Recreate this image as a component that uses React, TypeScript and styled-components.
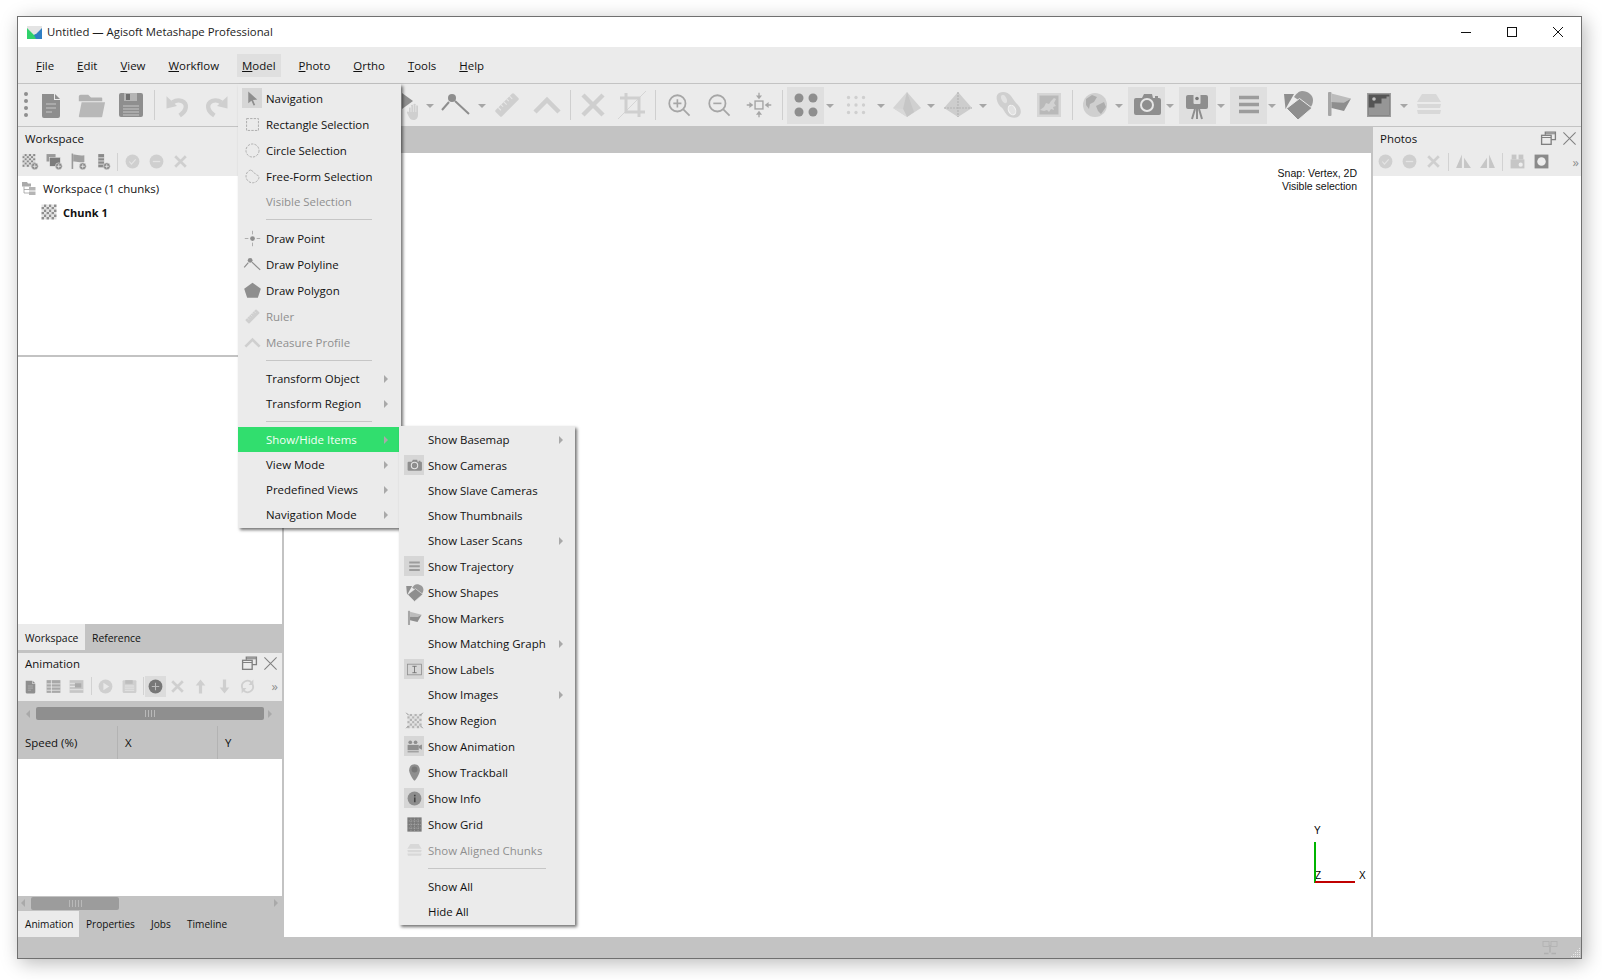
import React from "react";
import styled, { createGlobalStyle } from "styled-components";

const D = "#8e8e8e";
const M = "#a6a6a6";
const L = "#cfcfcf";
const PANEL = "#ebebeb";
const BAND = "#c3c3c3";

const GlobalStyle = createGlobalStyle`
  html, body { margin: 0; padding: 0; background: #fff; }
  body { font-family: "Open Sans", "Noto Sans", "Liberation Sans", sans-serif; font-size: 11.45px; color: #111; }
`;

type IconProps = { s?: number };
const icon = (content: React.ReactNode) => ({ s = 32 }: IconProps) => (
    <svg width={s} height={s} viewBox="0 0 32 32" style={{ display: "block" }}>{content}</svg>
);

const checker = (x: number, y: number, n: number, size: number, a: string, b: string) => {
    const out: React.ReactNode[] = [];
    for (let r = 0; r < n; r++) {
        for (let c = 0; c < n; c++) {
            out.push(<rect key={r + "-" + c} x={x + c * size} y={y + r * size} width={size} height={size} fill={(r + c) % 2 ? a : b} />);
        }
    }
    return out;
};

const DocIcon = icon(<>
    <path d="M7 5h12v6h6v16a2 2 0 0 1-2 2H9a2 2 0 0 1-2-2z" fill={D} />
    <path d="M20 5l5 5h-5z" fill={D} />
    <path d="M11 15h10M11 19h10M11 23h6" stroke="#c6c6c6" strokeWidth="1" />
</>);
const FolderIcon = icon(<>
    <path d="M3 7a2 2 0 0 1 2-2h8l3 3h11a1 1 0 0 1 1 1v3H3z" fill="#b2b2b2" />
    <path d="M6 13h25l-3 15a1 1 0 0 1-1 1H4a1 1 0 0 1-1-1z" fill="#b8b8b8" />
</>);
const SaveIcon = icon(<>
    <rect x="4" y="4" width="24" height="24" rx="2" fill={D} />
    <rect x="9" y="4" width="13" height="8" fill="#b5b5b5" />
    <rect x="11" y="5" width="4" height="6" fill="#6f6f6f" />
    <path d="M8 17h16M8 20h16M8 23h16M8 26h16" stroke="#c6c6c6" strokeWidth="1" />
</>);
const UndoIcon = icon(<>
    <path d="M4 6v14l12-3z" fill={L} />
    <path d="M11 13c7-5 16-1 15 6-.6 4-4 7-7 9" fill="none" stroke={L} strokeWidth="5" />
</>);
const RedoIcon = icon(<g transform="translate(32 0) scale(-1 1)">
    <path d="M4 6v14l12-3z" fill={L} />
    <path d="M11 13c7-5 16-1 15 6-.6 4-4 7-7 9" fill="none" stroke={L} strokeWidth="5" />
</g>);
const HandIcon = () => (
    <svg width={38} height={38} viewBox="0 0 38 38" style={{ display: "block" }}>
        <path d="M17 7l11 8-11 8z" fill={D} />
        <path d="M24 27v-5a1.200 1.200 0 0 1 2 0v-2a1.200 1.200 0 0 1 2.400 0v-1a1.200 1.200 0 0 1 2.400 0v1a1.200 1.200 0 0 1 2.200 0v9c0 3-2 5-4.500 5s-3.500-1-4.500-3l-2-4c-.5-1.500 1-2 2-1z" fill={L} />
        <path d="M26 20v6M28.400 19v7M30.800 19v7" stroke="#ebebeb" strokeWidth=".7" />
    </svg>
);
const PolylineIcon = icon(<>
    <circle cx="12" cy="9" r="4" fill={D} />
    <path d="M9 13l-7 8M15 12l14 13" stroke={D} strokeWidth="2" />
</>);
const RulerIcon = icon(<g transform="rotate(-45 16 16)">
    <rect x="3" y="11.500" width="26" height="9" rx="1.500" fill={L} />
    <path d="M8 11.500v4M12 11.500v3M16 11.500v4M20 11.500v3M24 11.500v4" stroke="#e8e8e8" strokeWidth="1" />
</g>);
const ProfileIcon = icon(<path d="M4 23L16 11l12 12" fill="none" stroke={L} strokeWidth="4.500" />);
const CrossIcon = icon(<path d="M6 6l20 20M26 6L6 26" stroke={L} strokeWidth="4.500" />);
const CropIcon = icon(<>
    <path d="M10 4v19h19M4 9h19v19" fill="none" stroke={L} strokeWidth="3" />
    <path d="M2 30L30 2" stroke={L} strokeWidth="0.800" />
</>);
const ZoomInIcon = icon(<>
    <circle cx="14" cy="14" r="10" fill="none" stroke={M} strokeWidth="2.200" />
    <path d="M21 21l8 8" stroke={M} strokeWidth="2.200" />
    <path d="M9 14h10M14 9v10" stroke={M} strokeWidth="2" />
</>);
const ZoomOutIcon = icon(<>
    <circle cx="14" cy="14" r="10" fill="none" stroke={M} strokeWidth="2.200" />
    <path d="M21 21l8 8" stroke={M} strokeWidth="2.200" />
    <path d="M9 14h10" stroke={M} strokeWidth="2" />
</>);
const FitIcon = icon(<>
    <rect x="11.500" y="11.500" width="9" height="9" fill="none" stroke={M} strokeWidth="1.600" />
    <path d="M16 2v5M16 25v5M2 16h5M25 16h5" stroke={M} strokeWidth="1.500" />
    <path d="M12.500 5h7L16 9.500zM12.500 27h7L16 22.500zM5 12.500v7L9.500 16zM27 12.500v7L22.500 16z" fill={M} />
</>);
const DotsIcon = icon(<>
    <circle cx="9" cy="9" r="4.500" fill={D} /><circle cx="23" cy="9" r="4.500" fill={D} />
    <circle cx="9" cy="23" r="4.500" fill={D} /><circle cx="23" cy="23" r="4.500" fill={D} />
</>);
const SmallDotsIcon = icon(<>
    {[6, 16, 26].map(y => [6, 16, 26].map(x => <circle key={x + "-" + y} cx={x} cy={y} r="2.200" fill={L} />))}
</>);
const PyramidIcon = icon(<>
    <path d="M17 3L3 19l14 9z" fill="#d4d4d4" />
    <path d="M17 3l14 16-14 9z" fill="#d0d0d0" />
    <path d="M17 3l-4 17 4 8 7-5z" fill="#c6c6c6" />
    <path d="M3 19l10 1 4 8z" fill="#d8d8d8" />
</>);
const PyramidGridIcon = icon(<>
    <path d="M16 3l14 16-14 9L2 19z" fill="#cdcdcd" />
    <path d="M16 3v25M2 19h28" stroke="#b4b4b4" strokeWidth="1.200" strokeDasharray="2 1" />
</>);
const BlobIcon = icon(<>
    <path d="M6 4c4-2 9-1 12 3s4 6 7 9 4 8 1 11-9 2-12-1-3-6-6-8-7-11-2-14z" fill={L} />
    <ellipse cx="11" cy="10" rx="2.500" ry="4.500" fill="#e2e2e2" transform="rotate(-25 11 10)" />
    <ellipse cx="19" cy="21" rx="3.500" ry="5" fill="#e2e2e2" stroke="#f4f4f4" strokeWidth="1" transform="rotate(-25 19 21)" />
</>);
const MapIcon = icon(<>
    <rect x="4" y="4" width="24" height="24" fill="#d6d6d6" />
    <rect x="6.500" y="6.500" width="19" height="19" fill="#b9b9b9" />
    <path d="M7 21l4-3 2-4 3 1 2-3 3-3 2 1-2 4 2 3-3 1 1 3-3-1-2 3-2-2-3 1z" fill="#d2d2d2" />
</>);
const GlobeIcon = icon(<>
    <circle cx="16" cy="16" r="12" fill={L} />
    <path d="M7 10l6-4 5 2-3 5-4 2-1 5-3-4zM17 17l8-4 2 5-5 7-3-3z" fill="#adadad" />
</>);
const CameraIcon = icon(<>
    <path d="M5 9h6l2-4h8l1 4h2v-2h3v2h1a2 2 0 0 1 2 2v13a2 2 0 0 1-2 2H5a2 2 0 0 1-2-2V11a2 2 0 0 1 2-2z" fill={D} />
    <circle cx="16" cy="16" r="6" fill="none" stroke="#e6e6e6" strokeWidth="2" />
</>);
const TripodIcon = icon(<>
    <rect x="4" y="6" width="22" height="14" rx="2" fill={D} />
    <rect x="11.500" y="3" width="7" height="12" rx="1" fill="#dcdcdc" />
    <circle cx="15" cy="9.500" r="1.800" fill="#777" />
    <path d="M15 20v10M13 20l-3 10M17 20l3 10" stroke={D} strokeWidth="2" />
</>);
const LinesIcon = icon(<path d="M6 8.500h20M6 15.500h20M6 22.500h20" stroke="#9c9c9c" strokeWidth="3.500" />);
const ShapesIcon = icon(<>
    <path d="M2 5h10L3.500 20z" fill={D} />
    <path d="M12 8c2-3 5-6 8-6 6 0 11 4 11 9 0 3-1 6-3 8z" fill="#999" />
    <path d="M17.500 9.500L30 19 16 31 4.500 19.500z" fill={D} stroke={PANEL} strokeWidth="1" />
</>);
const FlagIcon = icon(<>
    <rect x="5" y="3" width="3.500" height="24" rx="1" fill={M} />
    <path d="M8.500 4.500L28 9.500l-7 4-12.500-.5z" fill="#bcbcbc" />
    <path d="M28 9.500L21 22l-12.500-3v-6l12.500.5z" fill={D} />
</>);
const ImageIcon = icon(<>
    <rect x="4" y="4" width="24" height="24" fill="#9c9c9c" />
    <rect x="5.500" y="5.500" width="21" height="21" fill="#555" />
    <path d="M5.500 26.500v-8h6v-4h7v-5h5v-2h3v19z" fill="#969696" />
    <circle cx="11" cy="10" r="1.800" fill="#c4c4c4" />
</>);
const LayersIcon = icon(<>
    <path d="M9 5h14l5 8H4z" fill="#d8d8d8" />
    <path d="M4 15h24l-1 4H5z" fill="#d8d8d8" />
    <path d="M4 21h24l-1 4H5z" fill="#d8d8d8" />
</>);
const ArrowIcon = icon(<path d="M8 3v22l6-5 4 9 3-1-4-9 8-1z" fill={D} />);
const RectSelIcon = icon(<rect x="6" y="6" width="20" height="20" fill="none" stroke={M} strokeWidth="1.500" strokeDasharray="4 2" />);
const CircleSelIcon = icon(<circle cx="16" cy="16" r="11" fill="none" stroke={M} strokeWidth="1.500" strokeDasharray="4 2" />);
const FreeSelIcon = icon(<path d="M13 5A11 11 0 1 0 27 17c0-3-4-3-6-5s-3-4-8-7z" fill="none" stroke={M} strokeWidth="1.500" strokeDasharray="4 2" />);
const PointIcon = icon(<>
    <circle cx="16" cy="16" r="4" fill={D} />
    <path d="M16 3v6M16 23v6M3 16h6M23 16h6" stroke={M} strokeWidth="1.500" />
</>);
const PentagonIcon = icon(<path d="M16 3l14 10-5 15H7L2 13z" fill={D} />);
const LabelIcon = icon(<>
    <rect x="3" y="6" width="26" height="20" fill="none" stroke={D} strokeWidth="1.500" />
    <path d="M12 10h8M12 22h8M16 10v12" stroke="#666" strokeWidth="1.500" />
</>);
const RegionIcon = icon(<>
    {checker(4, 5, 6, 4, "#b4b4b4", "#e2e2e2")}
    <path d="M2 3l4 4M30 3l-4 4M2 29l4-4M30 29l-4-4" stroke={D} strokeWidth="1.500" />
</>);
const MovieIcon = icon(<>
    <circle cx="8" cy="8" r="3.500" fill={D} /><circle cx="18" cy="8" r="3.500" fill={D} />
    <rect x="3" y="13" width="21" height="10" fill={D} />
    <path d="M24 15l6-3v10l-6-3z" fill={D} />
    <rect x="3" y="25" width="21" height="2" fill={D} />
</>);
const PinIcon = icon(<>
    <path d="M16 2c6 0 9 5 9 10s-5 14-9 18c-4-4-9-13-9-18S10 2 16 2z" fill={D} />
    <circle cx="16" cy="11" r="5" fill="#777" />
</>);
const InfoIcon = icon(<>
    <circle cx="16" cy="16" r="13" fill={D} />
    <rect x="15" y="14" width="3" height="9" fill="#444" /><rect x="15" y="9" width="3" height="3" fill="#444" />
</>);
const GridIcon = icon(<>
    <rect x="4" y="4" width="24" height="24" fill="#7a7a7a" />
    <path d="M10 4v24M16 4v24M22 4v24M4 10h24M4 16h24M4 22h24" stroke="#b4b4b4" strokeWidth="1.200" strokeDasharray="1.500 1.500" />
</>);

// small panel tools
const CheckerIcon = icon(<>{checker(1, 1, 6, 5, "#8f8f8f", "#e4e4e4")}</>);
const PlusBadge = <>
    <circle cx="24" cy="25" r="6.500" fill="#8a8a8a" stroke="#ebebeb" strokeWidth="1" />
    <path d="M20 25h8M24 21v8" stroke="#eee" strokeWidth="1.500" />
</>;
const AddChunkIcon = icon(<>
    {checker(1, 2, 6, 4, "#8a8a8a", "#dcdcdc")}
    {PlusBadge}
</>);
const AddGroupIcon = icon(<>
    <rect x="1" y="2" width="17" height="14" fill="#9a9a9a" />
    <rect x="7" y="8" width="20" height="17" fill="#7c7c7c" stroke="#ebebeb" strokeWidth="1" />
    {PlusBadge}
</>);
const AddFlagIcon = icon(<>
    <rect x="3" y="1" width="3" height="29" fill="#9a9a9a" />
    <path d="M6 3c6-1 11 3 21 1v13c-8 2-14-2-21-1z" fill="#a0a0a0" />
    {PlusBadge}
</>);
const AddListIcon = icon(<>
    <rect x="8" y="2" width="11" height="25" fill="#8a8a8a" />
    <path d="M8 9h11M8 15h11M8 21h11" stroke="#eee" strokeWidth="1.500" />
    {PlusBadge}
</>);
const CheckCircleIcon = icon(<>
    <circle cx="16" cy="16" r="13" fill={L} />
    <path d="M10 16l4 5 8-9" fill="none" stroke="#e4e4e4" strokeWidth="2" />
</>);
const MinusCircleIcon = icon(<>
    <circle cx="16" cy="16" r="13" fill={L} />
    <path d="M9 16h14" stroke="#e4e4e4" strokeWidth="2.500" />
</>);
const SmallXIcon = icon(<path d="M6 6l20 20M26 6L6 26" stroke={L} strokeWidth="5" />);
const TimelineIcon = icon(<>
    <rect x="3" y="4" width="26" height="24" fill="#a8a8a8" />
    <path d="M3 11h26M3 17h26M3 23h26M12 4v24" stroke="#ebebeb" strokeWidth="1.500" />
</>);
const TimelineLightIcon = icon(<>
    <rect x="3" y="4" width="26" height="24" fill="#c6c6c6" />
    <rect x="13" y="10" width="12" height="8" fill="#aaa" />
    <path d="M3 10h10M3 16h10M3 22h26" stroke="#ebebeb" strokeWidth="1.500" />
</>);
const PlayIcon = icon(<>
    <circle cx="16" cy="16" r="13" fill={L} />
    <path d="M12 9l11 7-11 7z" fill="#e8e8e8" />
</>);
const FilmIcon = icon(<>
    <rect x="3" y="4" width="26" height="24" rx="2" fill={L} />
    <path d="M7 15h18M7 19h18M7 23h18" stroke="#ebebeb" strokeWidth="1.500" />
    <rect x="8" y="4" width="14" height="7" fill="#bdbdbd" />
</>);
const PlusCircleIcon = icon(<>
    <circle cx="16" cy="16" r="13" fill="#777" />
    <path d="M9 16h14M16 9v14" stroke="#bbb" strokeWidth="2" />
</>);
const UpIcon = icon(<path d="M16 3l9 11h-6v15h-6V14H7z" fill={L} />);
const DownIcon = icon(<path d="M16 29l9-11h-6V3h-6v15H7z" fill={L} />);
const LoopIcon = icon(<>
    <path d="M6 19A10.500 10.500 0 0 1 24 9" fill="none" stroke={L} strokeWidth="3.500" />
    <path d="M26 13A10.500 10.500 0 0 1 8 23" fill="none" stroke={L} strokeWidth="3.500" />
    <path d="M27 3v10H18zM5 29V19h9z" fill={L} />
</>);
const AlignLeftIcon = icon(<>
    <path d="M13 3v25H2zM17 9v19h13z" fill="#c6c6c6" />
</>);
const AlignRightIcon = icon(<>
    <path d="M19 3v25h11zM15 9v19H2z" fill="#c6c6c6" />
</>);
const CamPairIcon = icon(<>
    <rect x="5" y="3" width="9" height="9" fill="#c6c6c6" /><rect x="18" y="3" width="9" height="9" fill="#c6c6c6" />
    <rect x="3" y="12" width="26" height="17" fill="#c6c6c6" />
    <circle cx="22" cy="22" r="4" fill="#eee" />
</>);
const MaskIcon = icon(<>
    <rect x="3" y="3" width="26" height="26" fill="#8a8a8a" />
    <circle cx="16" cy="16" r="8" fill="#ededed" />
</>);
const FloatIcon = icon(<>
    <path d="M10 9V4h19v14h-8" fill="none" stroke="#808080" strokeWidth="2.500" />
    <rect x="3" y="10" width="18" height="17" fill="none" stroke="#808080" strokeWidth="2.500" />
    <path d="M3 14h18M10 7h19" stroke="#808080" strokeWidth="2" />
</>);
const CloseIcon = icon(<path d="M3 3l26 26M29 3L3 29" stroke="#808080" strokeWidth="2.200" />);
const TreeIcon = icon(<>
    <path d="M2 4h10l2 3h6v6H2z" fill="#aaa" />
    <path d="M6 13v13h10M6 19h10" fill="none" stroke="#999" strokeWidth="1.500" />
    <rect x="16" y="14" width="13" height="7" fill="#b5b5b5" />
    <rect x="16" y="23" width="13" height="7" fill="#b5b5b5" />
</>);
const LinkIcon = icon(<>
    <rect x="2" y="3" width="12" height="10" fill="none" stroke="#b0b0b0" strokeWidth="1.500" />
    <rect x="18" y="3" width="12" height="10" fill="none" stroke="#b0b0b0" strokeWidth="1.500" />
    <path d="M16 10v15" stroke="#b0b0b0" strokeWidth="3" />
    <path d="M4 27h9M19 27h9" stroke="#b0b0b0" strokeWidth="3" />
</>);

const Page = styled.div`
  width: 1602px;
  height: 980px;
  box-sizing: border-box;
  padding: 16px 20px 21px 17px;
`;

const Window = styled.div`
  position: relative;
  height: 100%;
  box-sizing: border-box;
  border: 1px solid #707070;
  display: flex;
  flex-direction: column;
  background: ${PANEL};
  box-shadow: 3px 4px 18px rgba(0, 0, 0, 0.28);
`;

const TitleBar = styled.div`
  height: 30px;
  flex: none;
  display: flex;
  align-items: center;
  background: #fff;
  padding-left: 9px;
`;

const AppLogo = styled.svg`
  width: 15px;
  height: 15px;
  margin-right: 5px;
`;

const TitleText = styled.span`
  flex: 1;
  font-size: 11.35px;
  color: #1c1c1c;
  padding-bottom: 2px;
`;

const WinButton = styled.div`
  width: 46px;
  height: 30px;
  display: flex;
  align-items: center;
  justify-content: center;
`;

const MenuBar = styled.div`
  height: 36px;
  flex: none;
  display: flex;
  align-items: center;
  padding-left: 13px;
  border-bottom: 1px solid ${BAND};
`;

const MenuTitle = styled.div<{ $open?: boolean }>`
  height: 23px;
  line-height: 23px;
  padding: 0 5px;
  margin-right: 13px;
  background: ${p => (p.$open ? "#dfdfdf" : "transparent")};
`;

const ToolBar = styled.div`
  height: 42px;
  flex: none;
  display: flex;
  align-items: center;
`;

const Grip = styled.div`
  width: 13px;
  flex: none;
  display: flex;
  flex-direction: column;
  align-items: center;
  gap: 3px;
  margin-bottom: 2px;
  padding-left: 3px;
  box-sizing: border-box;
`;

const GripDot = styled.i`
  width: 4px;
  height: 4px;
  border-radius: 50%;
  background: ${D};
`;

const ToolButton = styled.div<{ $w: number; $checked?: boolean }>`
  width: ${p => p.$w}px;
  height: 37px;
  flex: none;
  display: flex;
  align-items: center;
  justify-content: center;
  background: ${p => (p.$checked ? "#dfdfdf" : "transparent")};
`;

const ToolSep = styled.div<{ $w?: number }>`
  width: ${p => p.$w ?? 6}px;
  flex: none;
  height: 30px;
  display: flex;
  justify-content: center;
  &::before {
    content: "";
    width: 1px;
    background: #cfcfcf;
  }
`;

const ToolGap = styled.div<{ $w: number }>`
  width: ${p => p.$w}px;
  flex: none;
`;

const Caret = styled.div<{ $w?: number }>`
  width: ${p => p.$w ?? 10}px;
  flex: none;
  display: flex;
  justify-content: center;
  padding-top: 2px;
  &::before {
    content: "";
    border-left: 4px solid transparent;
    border-right: 4px solid transparent;
    border-top: 4px solid ${M};
  }
`;

const Body = styled.div`
  flex: 1;
  min-height: 0;
  display: flex;
  background: ${BAND};
`;

const LeftDock = styled.div`
  width: 266px;
  flex: none;
  display: flex;
  flex-direction: column;
`;

const DockPanel = styled.div`
  margin-right: 2px;
  background: ${PANEL};
`;

const DockHeader = styled.div<{ $h: number }>`
  height: ${p => p.$h}px;
  display: flex;
  align-items: center;
  padding: 0 1px 0 7px;
  border-top: 1px solid ${BAND};
  box-sizing: border-box;
`;

const DockTitle = styled.span`
  flex: 1;
`;

const DockAction = styled.div`
  width: 21px;
  display: flex;
  justify-content: center;
`;

const DockTools = styled.div<{ $h: number; $pl?: number }>`
  height: ${p => p.$h}px;
  box-sizing: border-box;
  display: flex;
  align-items: center;
  padding: 0 0 3px ${p => p.$pl ?? 0}px;
`;

const SmallTool = styled.div<{ $w?: number; $checked?: boolean }>`
  width: ${p => p.$w ?? 24}px;
  height: 21px;
  flex: none;
  display: flex;
  align-items: center;
  justify-content: center;
  background: ${p => (p.$checked ? "#dcdcdc" : "transparent")};
`;

const SmallSep = styled.div<{ $w?: number }>`
  width: ${p => p.$w ?? 6}px;
  height: 18px;
  flex: none;
  display: flex;
  justify-content: center;
  &::before {
    content: "";
    width: 1px;
    background: #d2d2d2;
  }
`;

const Overflow = styled.span<{ $mr: number }>`
  margin-left: auto;
  margin-right: ${p => p.$mr}px;
  color: #8f8f8f;
  font-size: 13px;
`;

const TreePane = styled.div`
  height: 179px;
  margin-right: 2px;
  background: #fff;
  padding-left: 3px;
`;

const TreeRow = styled.div<{ $indent?: number; $bold?: boolean }>`
  height: 24px;
  display: flex;
  align-items: center;
  gap: 6px;
  padding-left: ${p => p.$indent ?? 0}px;
  font-weight: ${p => (p.$bold ? 700 : 400)};
  font-size: ${p => (p.$bold ? "11px" : "inherit")};
  color: #111;
`;

const WhitePane = styled.div<{ $h?: number }>`
  margin-right: 2px;
  background: #fff;
  margin-top: ${p => (p.$h ? 2 : 0)}px;
  ${p => (p.$h ? `height: ${p.$h}px;` : "flex: 1;")}
`;

const TabStrip = styled.div<{ $h: number }>`
  height: ${p => p.$h}px;
  flex: none;
  display: flex;
  align-items: flex-start;
  background: ${BAND};
`;

const Tab = styled.div<{ $active?: boolean; $h: number; $w: number; $fs: number; $lh: number }>`
  width: ${p => p.$w}px;
  height: ${p => p.$h}px;
  box-sizing: border-box;
  line-height: ${p => p.$lh}px;
  padding-left: 7px;
  font-size: ${p => p.$fs}px;
  background: ${p => (p.$active ? PANEL : "transparent")};
`;

const ScrollRow = styled.div<{ $h: number; $pb?: number }>`
  height: ${p => p.$h}px;
  box-sizing: border-box;
  padding-bottom: ${p => p.$pb ?? 0}px;
  flex: none;
  display: flex;
  align-items: center;
  background: ${BAND};
`;

const ScrollThumb = styled.div<{ $w: number; $ml: number; $c: string }>`
  width: ${p => p.$w}px;
  height: 13px;
  margin-left: ${p => p.$ml}px;
  border-radius: 2px;
  background: ${p => p.$c};
  display: flex;
  align-items: center;
  justify-content: center;
  gap: 2px;
`;

const ThumbLine = styled.i`
  width: 1px;
  height: 7px;
  background: #b9b9b9;
`;

const ScrollArrow = styled.i<{ $dir: "l" | "r"; $ml: number }>`
  width: 0;
  height: 0;
  margin-left: ${p => p.$ml}px;
  border-top: 4px solid transparent;
  border-bottom: 4px solid transparent;
  ${p => (p.$dir === "l" ? `border-right: 4px solid #a9a9a9;` : `border-left: 4px solid #a9a9a9;`)}
`;

const TableHead = styled.div`
  height: 33px;
  flex: none;
  display: flex;
  background: ${BAND};
`;

const HeadCell = styled.div<{ $w: number }>`
  width: ${p => p.$w}px;
  flex: none;
  box-sizing: border-box;
  padding-left: 7px;
  line-height: 33px;
  border-right: 1px solid #b3b3b3;
  &:last-child { border-right: 0; }
`;

const Center = styled.div`
  flex: 1;
  min-width: 0;
  display: flex;
  flex-direction: column;
`;

const CenterBand = styled.div`
  height: 27px;
  flex: none;
`;

const Viewport = styled.div`
  position: relative;
  flex: 1;
  background: #fff;
  margin-right: 2px;
`;

const SnapInfo = styled.div`
  position: absolute;
  top: 14px;
  right: 14px;
  text-align: right;
  font-family: "Liberation Sans", sans-serif;
  font-size: 10.5px;
  line-height: 13px;
  color: #111;
`;

const AxisGizmo = styled.svg`
  position: absolute;
  right: 0;
  bottom: 0;
  width: 80px;
  height: 120px;
`;

const RightDock = styled.div`
  width: 208px;
  flex: none;
  display: flex;
  flex-direction: column;
  background: #fff;
`;

const RightPanel = styled.div`
  background: ${PANEL};
`;

const StatusBar = styled.div`
  height: 21px;
  flex: none;
  background: ${BAND};
  display: flex;
  align-items: center;
  justify-content: flex-end;
  position: relative;
`;

const StatusIcon = styled.div`
  margin-right: 23px;
`;

const SizeGrip = styled.svg`
  position: absolute;
  right: 0;
  bottom: 0;
  width: 12px;
  height: 12px;
`;

const Menu = styled.div<{ $w: number; $left: number; $top: number }>`
  position: absolute;
  left: ${p => p.$left}px;
  top: ${p => p.$top}px;
  width: ${p => p.$w}px;
  box-sizing: border-box;
  padding: 1px 0;
  background: ${PANEL};
  box-shadow: 2px 2px 3px rgba(0, 0, 0, 0.55);
  z-index: 5;
`;

const MenuItem = styled.div<{ $h: number; $on?: boolean; $off?: boolean; $pad: number; $right: number }>`
  height: ${p => p.$h}px;
  display: flex;
  align-items: center;
  padding-left: ${p => p.$pad}px;
  margin-right: ${p => p.$right}px;
  background: ${p => (p.$on ? "#31de6e" : "transparent")};
  color: ${p => (p.$on ? "#f4fff8" : p.$off ? "#8f8f8f" : "#111")};
`;

const MenuIconCell = styled.div<{ $checked?: boolean }>`
  width: 20px;
  height: 20px;
  flex: none;
  margin-right: 4px;
  display: flex;
  align-items: center;
  justify-content: center;
  background: ${p => (p.$checked ? "#d6d6d6" : "transparent")};
`;

const MenuLabel = styled.span<{ $pb: number }>`
  flex: 1;
  white-space: nowrap;
  padding-bottom: ${p => p.$pb}px;
`;

const SubArrow = styled.i<{ $mr: number }>`
  width: 0;
  height: 0;
  margin-right: ${p => p.$mr}px;
  border-top: 4px solid transparent;
  border-bottom: 4px solid transparent;
  border-left: 4px solid #a9a9a9;
`;

const MenuSep = styled.div<{ $ml: number; $mr: number }>`
  height: 11px;
  margin: 0 ${p => p.$mr}px 0 ${p => p.$ml}px;
  display: flex;
  align-items: center;
  &::before {
    content: "";
    flex: 1;
    height: 1px;
    background: #c6c6c6;
  }
`;

type Tool = { I?: React.FC<IconProps>; w: number; sz?: number; on?: boolean; kind?: "sep" | "gap" | "caret" | "hand" };

const mainTools: Tool[] = [
    { I: DocIcon, w: 40 }, { I: FolderIcon, w: 40, sz: 30 }, { I: SaveIcon, w: 40 },
    { kind: "sep", w: 6 },
    { I: UndoIcon, w: 40, sz: 28 }, { I: RedoIcon, w: 40, sz: 28 },
    { kind: "gap", w: 148 },
    { kind: "hand", w: 38 }, { kind: "caret", w: 13 },
    { I: PolylineIcon, w: 40 }, { kind: "caret", w: 11 },
    { I: RulerIcon, w: 40 }, { I: ProfileIcon, w: 40 },
    { kind: "sep", w: 6 },
    { I: CrossIcon, w: 39 }, { I: CropIcon, w: 40 },
    { kind: "sep", w: 7 },
    { I: ZoomInIcon, w: 40, sz: 26 }, { I: ZoomOutIcon, w: 40, sz: 26 }, { I: FitIcon, w: 40, sz: 28 },
    { kind: "sep", w: 6 }, { kind: "gap", w: 2 },
    { I: DotsIcon, w: 37, on: true }, { kind: "caret", w: 12 },
    { I: SmallDotsIcon, w: 40, sz: 24 }, { kind: "caret", w: 10 },
    { I: PyramidIcon, w: 40 }, { kind: "caret", w: 10 }, { kind: "gap", w: 2 },
    { I: PyramidGridIcon, w: 40 }, { kind: "caret", w: 10 }, { kind: "gap", w: 1 },
    { I: BlobIcon, w: 40 }, { I: MapIcon, w: 40 },
    { kind: "sep", w: 7 },
    { I: GlobeIcon, w: 38 }, { kind: "caret", w: 10 }, { kind: "gap", w: 4 },
    { I: CameraIcon, w: 37, on: true }, { kind: "caret", w: 10 }, { kind: "gap", w: 4 },
    { I: TripodIcon, w: 37, on: true }, { kind: "caret", w: 10 }, { kind: "gap", w: 4 },
    { I: LinesIcon, w: 37, on: true }, { kind: "caret", w: 10 }, { kind: "gap", w: 1 },
    { I: ShapesIcon, w: 40 }, { I: FlagIcon, w: 41 }, { I: ImageIcon, w: 40 },
    { kind: "caret", w: 9 }, { kind: "gap", w: 1 },
    { I: LayersIcon, w: 40 },
];

type SmallToolDef = { I?: React.FC<IconProps>; w?: number; on?: boolean; sep?: boolean };

const workspaceTools: SmallToolDef[] = [
    { I: AddChunkIcon }, { I: AddGroupIcon }, { I: AddFlagIcon }, { I: AddListIcon },
    { sep: true },
    { I: CheckCircleIcon }, { I: MinusCircleIcon }, { I: SmallXIcon },
];

const animationTools: SmallToolDef[] = [
    { I: DocIcon, w: 23 }, { I: TimelineIcon, w: 23 }, { I: TimelineLightIcon, w: 23 },
    { sep: true, w: 6 },
    { I: PlayIcon, w: 23 }, { I: FilmIcon, w: 25 },
    { sep: true, w: 3 },
    { I: PlusCircleIcon, w: 21, on: true }, { I: SmallXIcon, w: 23 }, { I: UpIcon, w: 23 }, { I: DownIcon, w: 24 }, { I: LoopIcon, w: 23 },
];

const photoTools: SmallToolDef[] = [
    { I: CheckCircleIcon }, { I: MinusCircleIcon }, { I: SmallXIcon },
    { sep: true, w: 6 },
    { I: AlignLeftIcon, w: 24 }, { I: AlignRightIcon, w: 24 },
    { sep: true, w: 6 },
    { I: CamPairIcon, w: 24 }, { I: MaskIcon, w: 24 },
];

type Entry = { label?: string; I?: React.FC<IconProps>; checked?: boolean; off?: boolean; sub?: boolean; on?: boolean; sep?: boolean };

const modelMenu: Entry[] = [
    { label: "Navigation", I: ArrowIcon, checked: true },
    { label: "Rectangle Selection", I: RectSelIcon },
    { label: "Circle Selection", I: CircleSelIcon },
    { label: "Free-Form Selection", I: FreeSelIcon },
    { label: "Visible Selection", off: true },
    { sep: true },
    { label: "Draw Point", I: PointIcon },
    { label: "Draw Polyline", I: PolylineIcon },
    { label: "Draw Polygon", I: PentagonIcon },
    { label: "Ruler", I: RulerIcon, off: true },
    { label: "Measure Profile", I: ProfileIcon, off: true },
    { sep: true },
    { label: "Transform Object", sub: true },
    { label: "Transform Region", sub: true },
    { sep: true },
    { label: "Show/Hide Items", sub: true, on: true },
    { label: "View Mode", sub: true },
    { label: "Predefined Views", sub: true },
    { label: "Navigation Mode", sub: true },
];

const showMenu: Entry[] = [
    { label: "Show Basemap", sub: true },
    { label: "Show Cameras", I: CameraIcon, checked: true },
    { label: "Show Slave Cameras" },
    { label: "Show Thumbnails" },
    { label: "Show Laser Scans", sub: true },
    { label: "Show Trajectory", I: LinesIcon, checked: true },
    { label: "Show Shapes", I: ShapesIcon },
    { label: "Show Markers", I: FlagIcon },
    { label: "Show Matching Graph", sub: true },
    { label: "Show Labels", I: LabelIcon, checked: true },
    { label: "Show Images", sub: true },
    { label: "Show Region", I: RegionIcon },
    { label: "Show Animation", I: MovieIcon, checked: true },
    { label: "Show Trackball", I: PinIcon },
    { label: "Show Info", I: InfoIcon, checked: true },
    { label: "Show Grid", I: GridIcon },
    { label: "Show Aligned Chunks", I: LayersIcon, off: true },
    { sep: true },
    { label: "Show All" },
    { label: "Hide All" },
];

const MenuList = ({ items, pad, sepL, sepR, arrowR, right = 0 }: { items: Entry[]; pad: number; sepL: number; sepR: number; arrowR: number; right?: number }) => (
    <>
        {items.map((it, i) =>
            it.sep ? <MenuSep key={i} $ml={sepL} $mr={sepR} /> : (
                <MenuItem key={i} $h={it.I ? 26 : 25} $on={it.on} $off={it.off} $pad={pad} $right={it.on ? right : 0}>
                    <MenuIconCell $checked={it.checked}>{it.I && <it.I s={it.checked ? 17 : 19} />}</MenuIconCell>
                    <MenuLabel $pb={it.I ? 0 : 1}>{it.label}</MenuLabel>
                    {it.sub && <SubArrow $mr={it.on ? arrowR - right : arrowR} />}
                </MenuItem>
            )
        )}
    </>
);

const SmallTools = ({ tools }: { tools: SmallToolDef[] }) => (
    <>
        {tools.map((t, i) => t.sep
            ? <SmallSep key={i} $w={t.w} />
            : <SmallTool key={i} $w={t.w} $checked={t.on}>{t.I && <t.I s={17} />}</SmallTool>)}
    </>
);

export default function App() {
    return (
        <Page>
            <GlobalStyle />
            <Window>
                <TitleBar>
                    <AppLogo viewBox="0 0 15 15">
                        <path d="M0 1h15v13H0z" fill="#e4e4e4" />
                        <path d="M0 3l7 7 2-1v5H0z" fill="#2fd16b" />
                        <path d="M15 3L9 9 7 10l2 4h6z" fill="#2f7fc4" />
                    </AppLogo>
                    <TitleText>Untitled — Agisoft Metashape Professional</TitleText>
                    <WinButton><svg width="10" height="10"><path d="M0 5.500h10" stroke="#111" /></svg></WinButton>
                    <WinButton><svg width="10" height="10"><rect x=".5" y=".5" width="9" height="9" fill="none" stroke="#111" /></svg></WinButton>
                    <WinButton><svg width="10" height="10"><path d="M0 0l10 10M10 0L0 10" stroke="#111" /></svg></WinButton>
                </TitleBar>
                <MenuBar>
                    <MenuTitle><u>F</u>ile</MenuTitle>
                    <MenuTitle><u>E</u>dit</MenuTitle>
                    <MenuTitle><u>V</u>iew</MenuTitle>
                    <MenuTitle><u>W</u>orkflow</MenuTitle>
                    <MenuTitle $open><u>M</u>odel</MenuTitle>
                    <MenuTitle><u>P</u>hoto</MenuTitle>
                    <MenuTitle><u>O</u>rtho</MenuTitle>
                    <MenuTitle><u>T</u>ools</MenuTitle>
                    <MenuTitle><u>H</u>elp</MenuTitle>
                </MenuBar>
                <ToolBar>
                    <Grip><GripDot /><GripDot /><GripDot /><GripDot /></Grip>
                    {mainTools.map((t, i) => {
                        if (t.kind === "sep") return <ToolSep key={i} $w={t.w} />;
                        if (t.kind === "gap") return <ToolGap key={i} $w={t.w} />;
                        if (t.kind === "caret") return <Caret key={i} $w={t.w} />;
                        if (t.kind === "hand") return <ToolButton key={i} $w={t.w}><HandIcon /></ToolButton>;
                        return <ToolButton key={i} $w={t.w} $checked={t.on}>{t.I && <t.I s={t.sz ?? 32} />}</ToolButton>;
                    })}
                </ToolBar>
                <Body>
                    <LeftDock>
                        <DockPanel>
                            <DockHeader $h={24}><DockTitle>Workspace</DockTitle></DockHeader>
                            <DockTools $h={26}><SmallTools tools={workspaceTools} /></DockTools>
                        </DockPanel>
                        <TreePane>
                            <TreeRow>
                                <TreeIcon s={16} />
                                <span>Workspace (1 chunks)</span>
                            </TreeRow>
                            <TreeRow $indent={20} $bold>
                                <CheckerIcon s={16} />
                                <span>Chunk 1</span>
                            </TreeRow>
                        </TreePane>
                        <WhitePane $h={267} />
                        <TabStrip $h={28}>
                            <Tab $active $h={26} $w={67} $fs={10.4} $lh={28}>Workspace</Tab>
                            <Tab $h={26} $w={80} $fs={10.4} $lh={28}>Reference</Tab>
                        </TabStrip>
                        <DockPanel>
                            <DockHeader $h={22}><DockTitle>Animation</DockTitle><DockAction><FloatIcon s={17} /></DockAction><DockAction><CloseIcon s={15} /></DockAction></DockHeader>
                            <DockTools $h={27} $pl={1}><SmallTools tools={animationTools} /><Overflow $mr={4}>»</Overflow></DockTools>
                        </DockPanel>
                        <ScrollRow $h={25}>
                            <ScrollArrow $dir="l" $ml={8} />
                            <ScrollThumb $w={228} $ml={6} $c="#8f8f8f"><ThumbLine /><ThumbLine /><ThumbLine /><ThumbLine /></ScrollThumb>
                            <ScrollArrow $dir="r" $ml={4} />
                        </ScrollRow>
                        <TableHead>
                            <HeadCell $w={100}>Speed (%)</HeadCell>
                            <HeadCell $w={100}>X</HeadCell>
                            <HeadCell $w={66}>Y</HeadCell>
                        </TableHead>
                        <WhitePane />
                        <ScrollRow $h={15} $pb={1}>
                            <ScrollArrow $dir="l" $ml={3} />
                            <ScrollThumb $w={88} $ml={6} $c="#9c9c9c"><ThumbLine /><ThumbLine /><ThumbLine /><ThumbLine /><ThumbLine /></ScrollThumb>
                            <ScrollArrow $dir="r" $ml={155} />
                        </ScrollRow>
                        <TabStrip $h={26}>
                            <Tab $active $h={26} $w={61} $fs={10.1} $lh={26}>Animation</Tab>
                            <Tab $h={26} $w={65} $fs={10.1} $lh={26}>Properties</Tab>
                            <Tab $h={26} $w={36} $fs={10.1} $lh={26}>Jobs</Tab>
                            <Tab $h={26} $w={60} $fs={10.1} $lh={26}>Timeline</Tab>
                        </TabStrip>
                    </LeftDock>
                    <Center>
                        <CenterBand />
                        <Viewport>
                            <SnapInfo>Snap: Vertex, 2D<br />Visible selection</SnapInfo>
                            <AxisGizmo viewBox="0 0 80 120">
                                <text x="23" y="17" fontFamily="Liberation Sans, sans-serif" fontSize="10">Y</text>
                                <text x="24" y="62" fontFamily="Liberation Sans, sans-serif" fontSize="10">Z</text>
                                <text x="68" y="62" fontFamily="Liberation Sans, sans-serif" fontSize="10">X</text>
                                <path d="M24 25v41" stroke="#00b400" strokeWidth="2" />
                                <path d="M24 65h40" stroke="#c00000" strokeWidth="2" />
                            </AxisGizmo>
                        </Viewport>
                    </Center>
                    <RightDock>
                        <RightPanel>
                            <DockHeader $h={24}><DockTitle>Photos</DockTitle><DockAction><FloatIcon s={17} /></DockAction><DockAction><CloseIcon s={15} /></DockAction></DockHeader>
                            <DockTools $h={26}><SmallTools tools={photoTools} /><Overflow $mr={2}>»</Overflow></DockTools>
                        </RightPanel>
                    </RightDock>
                </Body>
                <StatusBar>
                    <StatusIcon><LinkIcon s={16} /></StatusIcon>
                    <SizeGrip viewBox="0 0 12 12">
                        {[[10, 2], [8, 4], [10, 4], [6, 6], [8, 6], [10, 6], [4, 8], [6, 8], [8, 8], [10, 8], [2, 10], [4, 10], [6, 10], [8, 10], [10, 10]].map(([x, y]) => (
                            <rect key={x + "-" + y} x={x} y={y} width="1" height="1" fill="#e8e8e8" />
                        ))}
                    </SizeGrip>
                </StatusBar>
                <Menu $w={163} $left={220} $top={67}>
                    <MenuList items={modelMenu} pad={4} sepL={28} sepR={29} arrowR={13} right={2} />
                    <Menu $w={176} $left={161} $top={342}>
                        <MenuList items={showMenu} pad={5} sepL={29} sepR={29} arrowR={12} />
                    </Menu>
                </Menu>
            </Window>
        </Page>
    );
}
